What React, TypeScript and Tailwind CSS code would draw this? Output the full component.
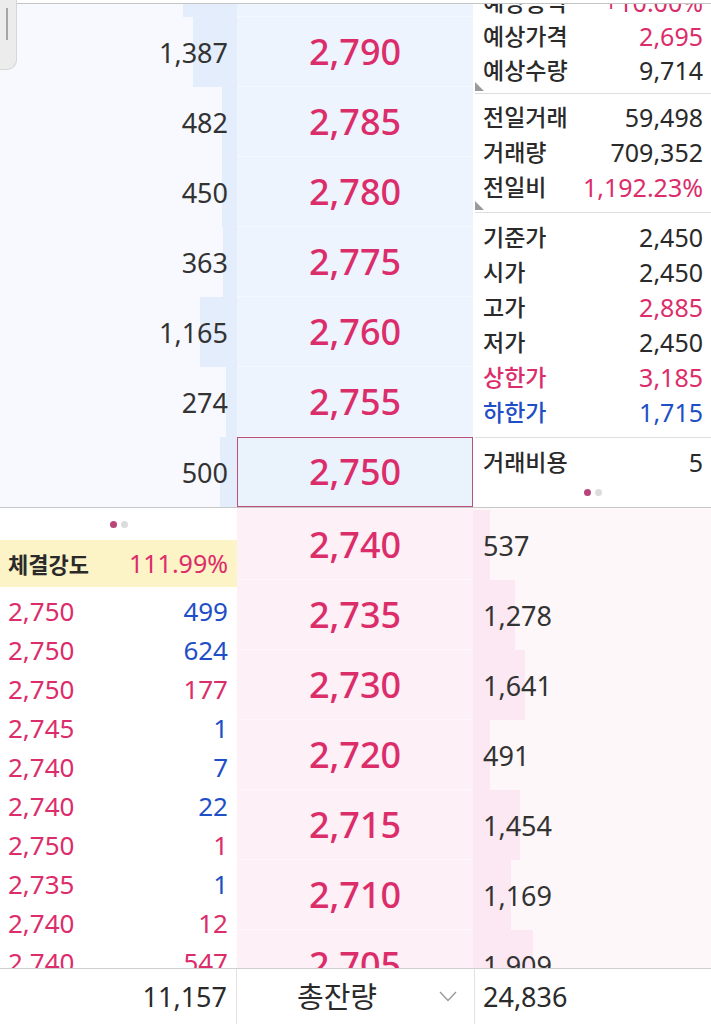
import React from "react";

const PINK = "text-[#dc2d6b]";
const BLUE = "text-[#1f4fc6]";

const sellRows = [
  { vol: "1,552", price: "2,795", bar: 54 },
  { vol: "1,387", price: "2,790", bar: 44 },
  { vol: "482", price: "2,785", bar: 15 },
  { vol: "450", price: "2,780", bar: 15 },
  { vol: "363", price: "2,775", bar: 14 },
  { vol: "1,165", price: "2,760", bar: 37 },
  { vol: "274", price: "2,755", bar: 11 },
  { vol: "500", price: "2,750", bar: 17 },
];

const buyRows = [
  { vol: "537", price: "2,740", bar: 17 },
  { vol: "1,278", price: "2,735", bar: 42 },
  { vol: "1,641", price: "2,730", bar: 52 },
  { vol: "491", price: "2,720", bar: 17 },
  { vol: "1,454", price: "2,715", bar: 47 },
  { vol: "1,169", price: "2,710", bar: 38 },
  { vol: "1,909", price: "2,705", bar: 60 },
];

const trades: { p: string; v: string; up: boolean }[] = [
  { p: "2,750", v: "499", up: false },
  { p: "2,750", v: "624", up: false },
  { p: "2,750", v: "177", up: true },
  { p: "2,745", v: "1", up: false },
  { p: "2,740", v: "7", up: false },
  { p: "2,740", v: "22", up: false },
  { p: "2,750", v: "1", up: true },
  { p: "2,735", v: "1", up: false },
  { p: "2,740", v: "12", up: true },
  { p: "2,740", v: "547", up: true },
];

type Info = { k: string; v: string; c?: string; kc?: string; h?: string };

function InfoRow({ k, v, c, kc, h }: Info) {
  return (
    <div className={`${h ?? "h-[35px]"} flex items-center justify-between`}>
      <span className={`text-[23px] leading-none font-medium ${kc ?? "text-[#2a2a2a]"}`}>{k}</span>
      <span className={`text-[25px] leading-none ${c ?? "text-[#2a2a2a]"}`}>{v}</span>
    </div>
  );
}

function Corner() {
  return (
    <div className="absolute left-0 bottom-[2px] w-[9px] h-[9px] bg-[#9a9a9a] [clip-path:polygon(0_0,0_100%,100%_100%)]" />
  );
}

function Dots() {
  return (
    <div className="flex justify-center gap-[4px]">
      <div className="w-[7px] h-[7px] rounded-full bg-[#b9457a]" />
      <div className="w-[7px] h-[7px] rounded-full bg-[#dcdcdc]" />
    </div>
  );
}

export default function App() {
  return (
    <div className="relative w-[711px] h-[1024px] overflow-hidden bg-white font-['Noto_Sans','Noto_Sans_CJK_KR',sans-serif] text-[#2a2a2a]">
      <div className="h-[3px] bg-white" />
      <div className="h-px bg-[#c4c4c4]" />

      {/* top: sell side */}
      <div className="flex h-[503px] overflow-hidden">
        <div className="w-[237px] shrink-0 bg-[#f8f9fe]">
          <div className="-mt-[57px] flex flex-col">
            {sellRows.map((r, i) => (
              <div key={i} className="relative shrink-0 h-[70px] flex items-center justify-end pr-[9px]">
                <div className="absolute right-0 top-0 bottom-0 bg-[#e3edfb]" style={{ width: r.bar }} />
                <span className="relative text-[27px] leading-none text-[#333]">{r.vol}</span>
              </div>
            ))}
          </div>
        </div>
        <div className="w-[236px] shrink-0 bg-[#edf4fd]">
          <div className="-mt-[57px] flex flex-col">
            {sellRows.map((r, i) =>
              i === sellRows.length - 1 ? (
                <div key={i} className="shrink-0 h-[70px] flex items-center justify-center border-[1.5px] border-[#b85077] bg-[#eaf2fc]">
                  <span className={`text-[36px] leading-none font-medium ${PINK}`}>{r.price}</span>
                </div>
              ) : (
                <div key={i} className="shrink-0 h-[70px] flex items-center justify-center border-b border-[#f5f9ff]">
                  <span className={`text-[36px] leading-none font-medium ${PINK}`}>{r.price}</span>
                </div>
              )
            )}
          </div>
        </div>
        <div className="flex-1 bg-white pl-[2px]">
          <div className="-mt-[24px] flex flex-col">
            <div className="relative shrink-0 pt-[5px] pb-[6px] pl-[8px] pr-[8px] border-b border-[#dedede]">
              <InfoRow k="예상등락" v="+10.00%" c={PINK} h="h-[34px]" />
              <InfoRow k="예상가격" v="2,695" c={PINK} h="h-[34px]" />
              <InfoRow k="예상수량" v="9,714" h="h-[34px]" />
              <Corner />
            </div>
            <div className="relative shrink-0 pt-[6px] pb-[7px] pl-[8px] pr-[8px] border-b border-[#dedede]">
              <InfoRow k="전일거래" v="59,498" />
              <InfoRow k="거래량" v="709,352" />
              <InfoRow k="전일비" v="1,192.23%" c={PINK} />
              <Corner />
            </div>
            <div className="shrink-0 pt-[7px] pb-[7px] pl-[8px] pr-[8px] border-b border-[#dedede]">
              <InfoRow k="기준가" v="2,450" />
              <InfoRow k="시가" v="2,450" />
              <InfoRow k="고가" v="2,885" c={PINK} />
              <InfoRow k="저가" v="2,450" />
              <InfoRow k="상한가" v="3,185" c={PINK} kc={PINK} />
              <InfoRow k="하한가" v="1,715" c={BLUE} kc={BLUE} />
            </div>
            <div className="shrink-0 pt-[7px] pl-[8px] pr-[8px]">
              <InfoRow k="거래비용" v="5" />
              <div className="mt-[9px]">
                <Dots />
              </div>
            </div>
          </div>
        </div>
      </div>

      <div className="h-px bg-[#c8c8c8]" />

      {/* bottom: buy side */}
      <div className="flex h-[460px] overflow-hidden">
        <div className="w-[237px] shrink-0 bg-white flex flex-col">
          <div className="shrink-0 mt-[13px]">
            <Dots />
          </div>
          <div className="shrink-0 mt-[12px] h-[47px] bg-[#fcf3c6] flex items-center justify-between pl-[8px] pr-[9px]">
            <span className="text-[22px] leading-none font-bold text-[#2a2a2a]">체결강도</span>
            <span className={`text-[25px] leading-none ${PINK}`}>111.99%</span>
          </div>
          <div className="shrink-0 mt-[4px] flex flex-col">
            {trades.map((t, i) => (
              <div key={i} className="shrink-0 h-[39px] flex items-center justify-between pl-[8px] pr-[9px]">
                <span className={`text-[26px] leading-none ${PINK}`}>{t.p}</span>
                <span className={`text-[26px] leading-none ${t.up ? PINK : BLUE}`}>{t.v}</span>
              </div>
            ))}
          </div>
        </div>
        <div className="w-[236px] shrink-0 bg-[#fdf0f6]">
          <div className="mt-[2px] flex flex-col">
            {buyRows.map((r, i) => (
              <div key={i} className="shrink-0 h-[70px] flex items-center justify-center border-b border-[#fef6fa]">
                <span className={`text-[36px] leading-none font-medium ${PINK}`}>{r.price}</span>
              </div>
            ))}
          </div>
        </div>
        <div className="flex-1 bg-[#fef7fa]">
          <div className="mt-[2px] flex flex-col">
            {buyRows.map((r, i) => (
              <div key={i} className="relative shrink-0 h-[70px] flex items-center pl-[10px]">
                <div className="absolute left-0 top-0 bottom-0 bg-[#fbe8f2]" style={{ width: r.bar }} />
                <span className="relative text-[27px] leading-none text-[#333]">{r.vol}</span>
              </div>
            ))}
          </div>
        </div>
      </div>

      {/* bottom bar */}
      <div className="h-[56px] flex border-t border-[#cfcfcf] bg-white">
        <div className="w-[237px] shrink-0 flex items-center justify-end pr-[9px] border-r border-[#e2e2e2]">
          <span className="text-[27px] leading-none text-[#2a2a2a]">11,157</span>
        </div>
        <div className="w-[238px] shrink-0 flex items-center border-r border-[#e2e2e2] pl-[60px] pr-[17px]">
          <span className="text-[29px] leading-none text-[#2a2a2a]">총잔량</span>
          <svg className="ml-auto" width="18" height="11" viewBox="0 0 18 11" fill="none">
            <polyline points="1,1 9,9.5 17,1" stroke="#9a9a9a" strokeWidth="1.4" />
          </svg>
        </div>
        <div className="flex-1 flex items-center pl-[8px]">
          <span className="text-[27px] leading-none text-[#2a2a2a]">24,836</span>
        </div>
      </div>

      {/* scroll handle overlay */}
      <div className="absolute left-0 top-0 w-[17px] h-[70px] bg-[#ececec] border-r border-b border-[#d6d6d6] rounded-br-[10px]">
        <div className="absolute left-[6px] top-[8px] w-[2px] h-[32px] bg-[#a6a6a6]" />
      </div>
    </div>
  );
}
